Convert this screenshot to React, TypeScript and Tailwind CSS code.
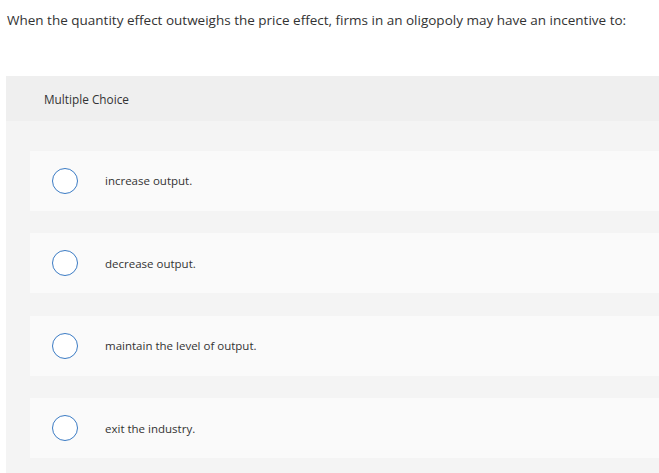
import React from "react";

const options = [
  "increase output.",
  "decrease output.",
  "maintain the level of output.",
  "exit the industry.",
];

export default function App() {
  return (
    <div className="w-[659px] h-[473px] overflow-hidden bg-white font-['Open_Sans',Arial,sans-serif] text-[#333]">
      {/* Question */}
      <p className="pl-[7px] pt-[11px] h-[76px] text-[13.5px] leading-[18px]">
        When the quantity effect outweighs the price effect, firms in an oligopoly may have an incentive to:
      </p>

      {/* Answer panel */}
      <div className="ml-[6px] h-[397px] bg-[#f4f4f4]">
        <div className="h-[45px] bg-[#efefef] pl-[38px] pt-[2px] flex items-center text-[11.8px]">
          Multiple Choice
        </div>
        <div className="pl-[24px] pt-[30px] flex flex-col gap-[22.4px]">
          {options.map((label, i) => (
            <div key={i} className="h-[60px] bg-[#fafafa] flex items-center">
              <div className="ml-[22px] w-[26px] h-[26px] rounded-full border-[1.5px] border-[#3b7bc4] bg-white shrink-0" />
              <span className="ml-[27px] text-[11.5px]">{label}</span>
            </div>
          ))}
        </div>
      </div>
    </div>
  );
}
